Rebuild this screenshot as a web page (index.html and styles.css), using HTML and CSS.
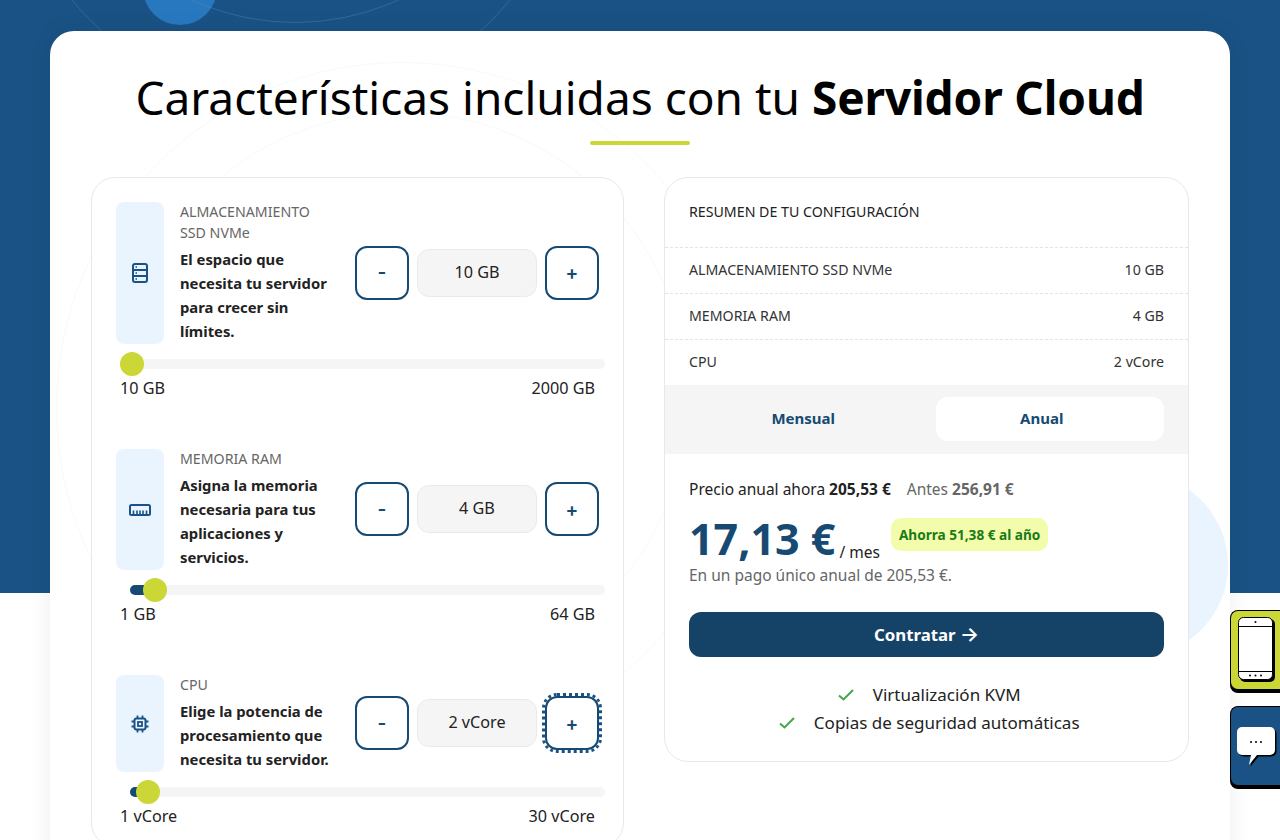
FILE: index.html
```html
<!DOCTYPE html>
<html lang="es">
<head>
    <meta charset="UTF-8">
    <meta name="viewport" content="width=device-width, initial-scale=1.0">
    <title>Servidor Cloud</title>
    <link rel="stylesheet" href="styles.css">
</head>
<body>
    <!-- hero decoration -->
    <div class="blob"></div>
    <div class="ring ring-a"></div>
    <div class="ring ring-b"></div>

    <main class="card">
        <div class="faint faint-a"></div>
        <div class="faint faint-b"></div>
        <div class="soft-circle"></div>

        <h1 class="title">Características incluidas con tu <strong>Servidor Cloud</strong></h1>
        <div class="title-line"></div>

        <div class="columns">
            <section class="panel options">
                <div class="option">
                    <div class="option-row">
                        <div class="tile">
                            <svg class="icon" width="18" height="22" viewBox="0 0 18 22" fill="none" stroke="#1a5285" stroke-width="2">
                                <rect x="2" y="2" width="14" height="18" rx="2"/>
                                <path d="M2 8h14M2 14h14"/>
                                <path d="M4.5 5h1.5M4.5 11h1.5M4.5 17h1.5" stroke-width="1.5"/>
                            </svg>
                        </div>
                        <div class="option-text">
                            <div class="option-label">ALMACENAMIENTO<br>SSD NVMe</div>
                            <div class="option-desc">El espacio que<br>necesita tu servidor<br>para crecer sin<br>límites.</div>
                        </div>
                        <div class="stepper">
                            <button class="step">-</button>
                            <div class="step-value">10 GB</div>
                            <button class="step">+</button>
                        </div>
                    </div>
                    <div class="track">
                        <div class="track-fill" style="width: 2px"></div>
                        <div class="thumb" style="left: 2px"></div>
                    </div>
                    <div class="limits"><span>10 GB</span><span>2000 GB</span></div>
                </div>

                <div class="option">
                    <div class="option-row">
                        <div class="tile">
                            <svg class="icon" width="24" height="14" viewBox="0 0 24 14" fill="none" stroke="#1a5285" stroke-width="2">
                                <rect x="2" y="2" width="20" height="10" rx="1.5"/>
                                <path d="M5.5 12V7.5M9 12V7.5M12 12V7.5M15 12V7.5M18.500 12V7.5" stroke-width="1.6"/>
                            </svg>
                        </div>
                        <div class="option-text">
                            <div class="option-label">MEMORIA RAM</div>
                            <div class="option-desc">Asigna la memoria<br>necesaria para tus<br>aplicaciones y<br>servicios.</div>
                        </div>
                        <div class="stepper">
                            <button class="step">-</button>
                            <div class="step-value">4 GB</div>
                            <button class="step">+</button>
                        </div>
                    </div>
                    <div class="track">
                        <div class="track-fill" style="width: 25px"></div>
                        <div class="thumb" style="left: 25px"></div>
                    </div>
                    <div class="limits"><span>1 GB</span><span>64 GB</span></div>
                </div>

                <div class="option">
                    <div class="option-row">
                        <div class="tile">
                            <svg class="icon" width="18" height="18" viewBox="0 0 18 18" fill="none" stroke="#1a5285" stroke-width="2">
                                <rect x="3.500" y="3.500" width="11" height="11" rx="2"/>
                                <rect x="7" y="7" width="4" height="4" stroke-width="1.800"/>
                                <path d="M6.500 0.500v3M11.500 0.500v3M6.500 14.500v3M11.500 14.500v3M0.500 6.500h3M0.500 11.500h3M14.500 6.500h3M14.500 11.500h3" stroke-width="1.800"/>
                            </svg>
                        </div>
                        <div class="option-text">
                            <div class="option-label">CPU</div>
                            <div class="option-desc">Elige la potencia de<br>procesamiento que<br>necesita tu servidor.</div>
                        </div>
                        <div class="stepper">
                            <button class="step">-</button>
                            <div class="step-value">2 vCore</div>
                            <button class="step is-focus">+</button>
                        </div>
                    </div>
                    <div class="track">
                        <div class="track-fill" style="width: 18px"></div>
                        <div class="thumb" style="left: 18px"></div>
                    </div>
                    <div class="limits"><span>1 vCore</span><span>30 vCore</span></div>
                </div>
            </section>

            <section class="panel summary">
                <div class="summary-title">RESUMEN DE TU CONFIGURACIÓN</div>
                <div class="summary-row"><span>ALMACENAMIENTO SSD NVMe</span><span>10 GB</span></div>
                <div class="summary-row"><span>MEMORIA RAM</span><span>4 GB</span></div>
                <div class="summary-row last"><span>CPU</span><span>2 vCore</span></div>

                <div class="billing">
                    <div class="billing-btn">Mensual</div>
                    <div class="billing-btn active">Anual</div>
                </div>

                <div class="pricing">
                    <div class="price-line">
                        <span>Precio anual ahora <b>205,53 €</b></span>
                        <span class="old-price">Antes <b>256,91 €</b></span>
                    </div>
                    <div class="price-main">
                        <span class="price-big">17,13 €</span>
                        <span class="price-unit">/ mes</span>
                        <span class="save-badge">Ahorra 51,38 € al año</span>
                    </div>
                    <div class="price-note">En un pago único anual de 205,53 €.</div>
                    <button class="buy">Contratar <span class="arrow">→</span></button>
                    <ul class="features">
                        <li>
                            <svg width="16" height="12" viewBox="0 0 16 12" fill="none" stroke="#43a648" stroke-width="2"><path d="M1 6.5l4.5 4L15 1"/></svg>
                            Virtualización KVM
                        </li>
                        <li>
                            <svg width="16" height="12" viewBox="0 0 16 12" fill="none" stroke="#43a648" stroke-width="2"><path d="M1 6.5l4.5 4L15 1"/></svg>
                            Copias de seguridad automáticas
                        </li>
                    </ul>
                </div>
            </section>
        </div>
    </main>

    <!-- floating side buttons -->
    <div class="side-btn side-phone">
        <svg width="38" height="66" viewBox="0 0 38 66">
            <rect x="2" y="2" width="35" height="63" rx="5" fill="#000"/>
            <rect x="0.5" y="0.5" width="34" height="62" rx="5" fill="#fff" stroke="#000"/>
            <path d="M1 9.500h33M1 54.500h33" stroke="#000" fill="none"/>
            <circle cx="17.500" cy="5" r="1" fill="#000"/>
            <circle cx="12" cy="58.500" r="1" fill="#000"/>
            <circle cx="17.500" cy="58.500" r="1" fill="#000"/>
            <circle cx="23" cy="58.500" r="1" fill="#000"/>
        </svg>
    </div>
    <div class="side-btn side-chat">
        <svg width="40" height="40" viewBox="0 0 40 40">
            <path d="M5 0h28a5 5 0 0 1 5 5v18a5 5 0 0 1-5 5H20l-8 10 2-10H5a5 5 0 0 1-5-5V5a5 5 0 0 1 5-5z" fill="#000" transform="translate(1.500 1.500)"/>
            <path d="M5 0h28a5 5 0 0 1 5 5v18a5 5 0 0 1-5 5H20l-8 10 2-10H5a5 5 0 0 1-5-5V5a5 5 0 0 1 5-5z" fill="#fff"/>
            <circle cx="14" cy="15" r="1" fill="#000"/>
            <circle cx="19" cy="15" r="1" fill="#000"/>
            <circle cx="24" cy="15" r="1" fill="#000"/>
        </svg>
    </div>
</body>
</html>
```

FILE: styles.css
```css
html, body {
    margin: 0;
    padding: 0;
}
body {
    position: relative;
    height: 840px;
    overflow: hidden;
    font-family: "Noto Sans", Arial, sans-serif;
    color: #222;
    background: linear-gradient(#1a5285 0, #1a5285 593px, #fff 593px);
}

/* decoration */
.blob {
    position: absolute;
    left: 143px;
    top: -49px;
    width: 74px;
    height: 74px;
    border-radius: 50%;
    background: #2878c0;
}
.ring {
    position: absolute;
    border-radius: 50%;
    border: 1px solid rgba(90, 150, 210, .35);
}
.ring-a {
    left: 7px;
    top: -464px;
    width: 566px;
    height: 566px;
}
.ring-b {
    left: 46px;
    top: -475px;
    width: 496px;
    height: 496px;
}
.faint {
    position: absolute;
    border-radius: 50%;
    border: 1px solid #f8f9f9;
}
.faint-a {
    left: 6px;
    top: 31px;
    width: 690px;
    height: 690px;
}
.faint-b {
    left: 66px;
    top: 81px;
    width: 570px;
    height: 570px;
}
.soft-circle {
    position: absolute;
    left: 994px;
    top: 442px;
    width: 184px;
    height: 184px;
    border-radius: 50%;
    background: #eaf4ff;
}

/* main card */
.card {
    position: relative;
    margin: 31px 50px 0;
    padding: 37px 41px 0;
    height: 900px;
    background: #fff;
    border-radius: 24px;
    box-shadow: 0 0 24px rgba(0, 0, 0, .07);
}
.title {
    position: relative;
    margin: 0;
    font-size: 46px;
    line-height: 58px;
    font-weight: 400;
    text-align: center;
    color: #000;
    white-space: nowrap;
}
.title strong {
    font-weight: 700;
    letter-spacing: -0.15px;
}
.title-line {
    position: relative;
    width: 100px;
    height: 4px;
    margin: 15px auto 32px;
    border-radius: 2px;
    background: #cbd637;
}
.columns {
    position: relative;
    display: grid;
    grid-template-columns: 533px 525px;
    gap: 40px;
    align-items: start;
}
.panel {
    background: #fff;
    border: 1px solid #e8e8e8;
    border-radius: 24px;
    box-sizing: border-box;
}

/* left column */
.options {
    padding: 24px 18px 0 24px;
    height: 670px;
}
.option {
    margin-bottom: 50px;
}
.option-row {
    display: flex;
    align-items: stretch;
    gap: 16px;
    margin-right: 6px;
}
.tile {
    flex: 0 0 48px;
    display: flex;
    align-items: center;
    justify-content: center;
    background: #eaf4ff;
    border-radius: 8px;
}
.option-text {
    flex: 1;
    min-width: 0;
    margin-top: -1px;
    padding-bottom: 1px;
}
.option-label {
    font-size: 14.2px;
    line-height: 21px;
    color: #666;
    margin-bottom: 4px;
}
.option-desc {
    font-size: 14.8px;
    line-height: 24px;
    font-weight: 700;
    color: #222;
    white-space: nowrap;
}
.stepper {
    display: flex;
    align-items: center;
    gap: 8px;
    margin-bottom: 1px;
}
.step {
    width: 54px;
    height: 54px;
    box-sizing: border-box;
    border: 2px solid #164a73;
    border-radius: 12px;
    background: #fff;
    color: #164a73;
    font-family: Inter, "Noto Sans", sans-serif;
    font-size: 19px;
    font-weight: 600;
    padding: 0;
}
.step.is-focus {
    outline: 3px dotted #1a5285;
}
.step-value {
    width: 120px;
    height: 48px;
    box-sizing: border-box;
    padding-bottom: 2px;
    display: flex;
    align-items: center;
    justify-content: center;
    background: #f5f5f5;
    border: 1px solid #eaeaea;
    border-radius: 12px;
    font-size: 16.2px;
    color: #222;
}
.track {
    position: relative;
    height: 10px;
    margin: 15px 0 0 14px;
    background: #f5f5f5;
    border-radius: 5px;
}
.track-fill {
    height: 10px;
    background: #164a73;
    border-radius: 5px;
}
.thumb {
    position: absolute;
    top: -7px;
    width: 24px;
    height: 24px;
    margin-left: -12px;
    border-radius: 50%;
    background: #cbd637;
}
.limits {
    display: flex;
    justify-content: space-between;
    margin-top: 8px;
    padding: 0 10px 0 4px;
    font-size: 16.2px;
    line-height: 22px;
    color: #222;
}

/* right column */
.summary {
    height: 585px;
    overflow: hidden;
}
.summary-title {
    height: 70px;
    box-sizing: border-box;
    padding: 24px 24px 0;
    font-size: 14.2px;
    line-height: 20px;
    color: #222;
    border-bottom: 1px dashed #e4e4e4;
}
.summary-row {
    display: flex;
    justify-content: space-between;
    align-items: center;
    height: 46px;
    box-sizing: border-box;
    padding: 0 24px 2px;
    font-size: 14.2px;
    color: #333;
    border-bottom: 1px dashed #e4e4e4;
}
.summary-row.last {
    height: 45px;
    border-bottom: none;
}
.billing {
    display: grid;
    grid-template-columns: 1fr 1fr;
    gap: 18px;
    padding: 12px 24px 13px;
    background: #f5f5f5;
}
.billing-btn {
    height: 44px;
    box-sizing: border-box;
    padding-bottom: 2px;
    display: flex;
    align-items: center;
    justify-content: center;
    border-radius: 12px;
    font-size: 15px;
    font-weight: 700;
    color: #164a73;
}
.billing-btn.active {
    background: #fff;
    padding-right: 16px;
}
.pricing {
    padding: 24px 24px 0;
}
.price-line {
    display: flex;
    gap: 16px;
    font-size: 15.500px;
    line-height: 22px;
}
.old-price {
    color: #666;
}
.price-main {
    display: flex;
    align-items: flex-start;
    margin-top: 14px;
    height: 50px;
}
.price-big {
    font-size: 43px;
    line-height: 50px;
    font-weight: 700;
    color: #164a73;
}
.price-unit {
    margin: 28px 0 0 4px;
    font-size: 15.500px;
    line-height: 20px;
}
.save-badge {
    margin: 4px 0 0 11px;
    padding: 0 8px;
    height: 33px;
    line-height: 33px;
    background: #f2fcab;
    border-radius: 10px;
    font-size: 13.600px;
    font-weight: 700;
    color: #1a7a1a;
    white-space: nowrap;
}
.price-note {
    font-size: 15.500px;
    line-height: 22px;
    color: #666;
}
.buy {
    display: block;
    width: 100%;
    height: 45px;
    margin-top: 26px;
    border: none;
    border-radius: 12px;
    background: #154368;
    color: #fff;
    font-family: inherit;
    font-size: 16.8px;
    line-height: 20px;
    font-weight: 700;
}
.arrow {
    font-family: Inter, sans-serif;
    font-size: 20px;
    font-weight: 600;
    line-height: 20px;
}
.features {
    list-style: none;
    margin: 24px 0 0;
    padding: 0 0 0 6px;
    font-size: 17px;
    line-height: 28px;
    text-align: center;
}
.features svg {
    margin-right: 14px;
}

/* floating buttons */
.side-btn {
    position: absolute;
    left: 1230px;
    width: 60px;
    box-sizing: border-box;
    border-radius: 8px 0 0 8px;
    border: 1px solid #000;
    border-right: none;
    box-shadow: 0 3px 0 #000;
    display: flex;
    padding-left: 7px;
}
.side-phone {
    top: 610px;
    height: 80px;
    background: #cbd637;
    align-items: center;
}
.side-chat {
    top: 706px;
    height: 80px;
    background: #1a5285;
    align-items: flex-start;
    padding-top: 20px;
    padding-left: 6px;
}
```
